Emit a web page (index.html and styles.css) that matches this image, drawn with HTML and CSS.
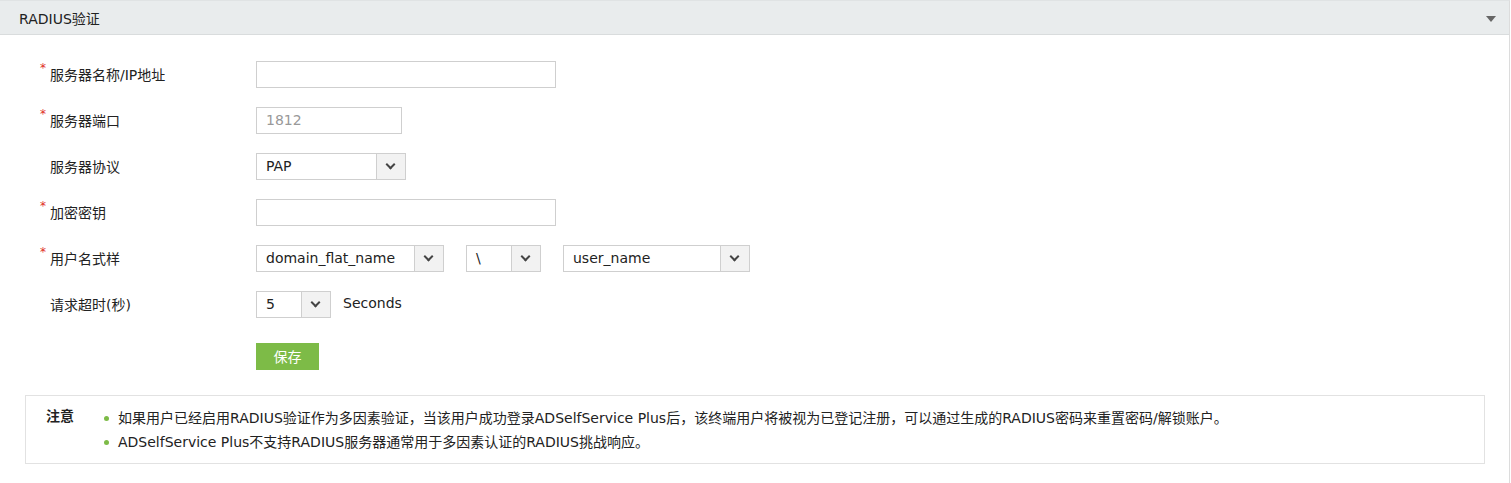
FILE: index.html
```html
<!DOCTYPE html>
<html lang="zh-CN">
<head>
    <meta charset="UTF-8">
    <title>RADIUS验证</title>
    <link rel="stylesheet" href="styles.css">
</head>
<body>
<div class="panel">
    <div class="panel-head">
        <span>RADIUS验证</span>
        <span class="caret"></span>
    </div>
    <div class="panel-body">
        <div class="form">
            <div class="row">
                <label class="lbl req">服务器名称/IP地址</label>
                <div class="field"><input class="txt wide" type="text"></div>
            </div>
            <div class="row">
                <label class="lbl req">服务器端口</label>
                <div class="field"><input class="txt port" type="text" placeholder="1812"></div>
            </div>
            <div class="row">
                <label class="lbl">服务器协议</label>
                <div class="field">
                    <div class="sel w150"><span class="val">PAP</span><span class="arr"></span></div>
                </div>
            </div>
            <div class="row">
                <label class="lbl req">加密密钥</label>
                <div class="field"><input class="txt wide" type="text"></div>
            </div>
            <div class="row">
                <label class="lbl req">用户名式样</label>
                <div class="field">
                    <div class="sel w188"><span class="val">domain_flat_name</span><span class="arr"></span></div>
                    <div class="sel w74"><span class="val">\</span><span class="arr"></span></div>
                    <div class="sel w186"><span class="val">user_name</span><span class="arr"></span></div>
                </div>
            </div>
            <div class="row">
                <label class="lbl">请求超时(秒)</label>
                <div class="field">
                    <div class="sel w74"><span class="val">5</span><span class="arr"></span></div>
                    <span class="unit">Seconds</span>
                </div>
            </div>
            <div class="row btn-row">
                <div class="field"><button class="save">保存</button></div>
            </div>
        </div>
        <div class="note">
            <div class="note-title">注意</div>
            <ul>
                <li>如果用户已经启用RADIUS验证作为多因素验证，当该用户成功登录ADSelfService Plus后，该终端用户将被视为已登记注册，可以通过生成的RADIUS密码来重置密码/解锁账户。</li>
                <li>ADSelfService Plus不支持RADIUS服务器通常用于多因素认证的RADIUS挑战响应。</li>
            </ul>
        </div>
    </div>
</div>
</body>
</html>
```

FILE: styles.css
```css
body {
    margin: 0;
    padding: 0;
    font-family: "DejaVu Sans", "Noto Sans CJK SC", sans-serif;
    font-size: 14px;
    color: #222;
    background: #fff;
}
.panel {
    width: 1510px;
    height: 483px;
    border-top: 1px solid #e0e3e4;
    border-right: 1px solid #dcdcdc;
    box-sizing: border-box;
}
.panel-head {
    height: 34px;
    background: #e9eced;
    border-bottom: 1px solid #d9dcdd;
    box-sizing: border-box;
    display: flex;
    align-items: center;
    justify-content: space-between;
    padding: 0 13px 0 19px;
    color: #222;
}
.caret {
    width: 0;
    height: 0;
    border-left: 5px solid transparent;
    border-right: 5px solid transparent;
    border-top: 6px solid #666;
    margin-top: 2px;
}
.panel-body {
    padding: 25px 24px 0 25px;
}
.form {
    padding-left: 15px;
}
.row {
    display: flex;
    align-items: center;
    height: 28px;
    margin-bottom: 18px;
}
.lbl {
    width: 216px;
    padding-left: 10px;
    box-sizing: border-box;
    position: relative;
}
.lbl.req::before {
    content: "*";
    color: #e0301e;
    position: absolute;
    left: 0;
    top: -3px;
    font-size: 12px;
}
.field {
    display: flex;
    align-items: center;
}
/* sibling margins collapse, so this wins over the 18px above */
.btn-row {
    margin-top: 24px;
}
.btn-row .field {
    margin-left: 216px;
}
.txt {
    height: 27px;
    border: 1px solid #cfcfcf;
    box-sizing: border-box;
    padding: 0 9px;
    font-family: inherit;
    font-size: 14px;
    color: #222;
    outline: none;
}
.txt.wide {
    width: 300px;
}
.txt.port {
    width: 146px;
}
.txt::placeholder {
    color: #999;
}
.sel {
    height: 27px;
    border: 1px solid #cfcfcf;
    box-sizing: border-box;
    display: flex;
    margin-right: 22px;
}
.sel .val {
    flex: 1;
    padding-left: 9px;
    line-height: 25px;
}
.sel .arr {
    width: 28px;
    border-left: 1px solid #cfcfcf;
    background: #f2f2f2;
    position: relative;
}
.sel .arr::after {
    content: "";
    position: absolute;
    left: 10px;
    top: 7px;
    width: 5px;
    height: 5px;
    border-right: 2px solid #444;
    border-bottom: 2px solid #444;
    transform: rotate(45deg);
}
.w150 { width: 150px; }
.w188 { width: 188px; }
.w74 { width: 75px; }
.w186 { width: 187px; }
.unit {
    margin-left: -10px;
    margin-top: -3px;
}
.save {
    width: 63px;
    height: 27px;
    background: #7dbb47;
    color: #fff;
    border: none;
    font-family: inherit;
    font-size: 14px;
    padding: 0;
}
.note {
    margin-top: 25px;
    border: 1px solid #e2e2e2;
    display: flex;
    padding: 10px 20px 0 20px;
    height: 69px;
    box-sizing: border-box;
}
.note-title {
    font-weight: bold;
    width: 58px;
    line-height: 20px;
}
.note ul {
    margin: 0;
    padding: 0 0 0 14px;
    list-style: none;
}
.note li {
    position: relative;
    line-height: 24px;
}
.note li::before {
    content: "";
    position: absolute;
    left: -14px;
    top: 10px;
    width: 5px;
    height: 5px;
    border-radius: 50%;
    background: #7dbb47;
}
```
